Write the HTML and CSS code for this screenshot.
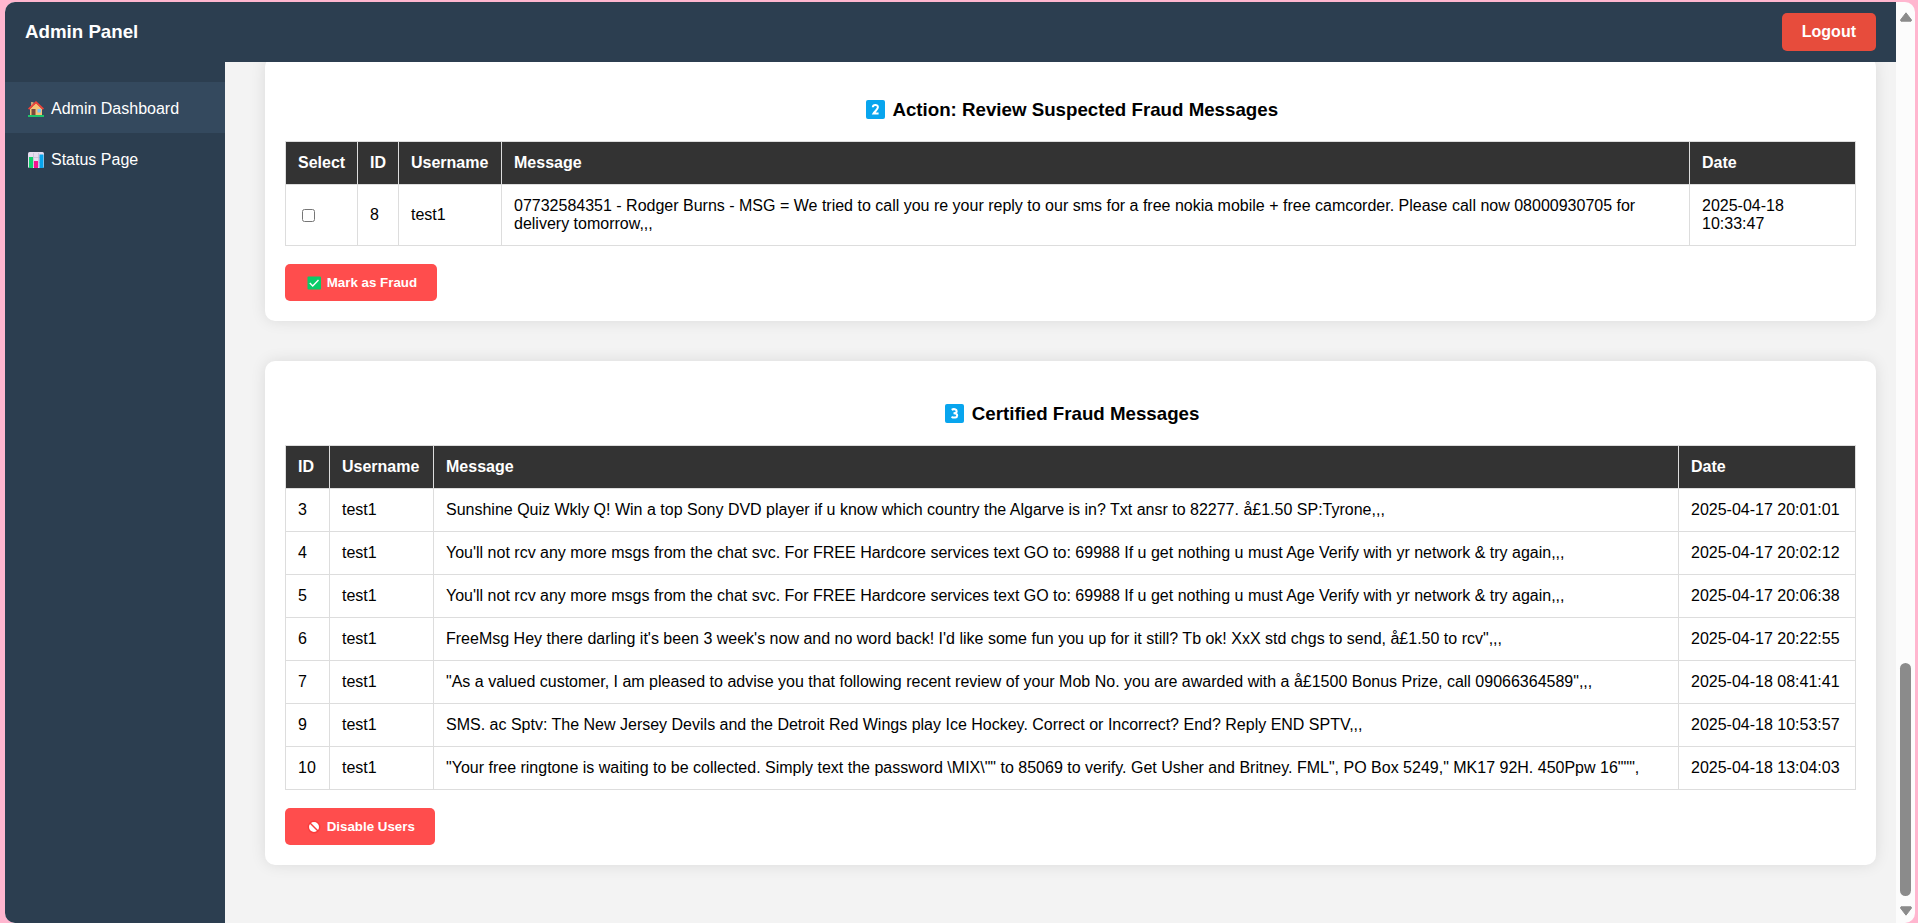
FILE: index.html
```html
<!DOCTYPE html>
<html lang="en">
<head>
<meta charset="utf-8">
<title>Admin Panel</title>
<link rel="stylesheet" href="styles.css">
</head>
<body>
<div class="window">
  <div class="page">
    <header class="topbar">
      <h3 class="brand">Admin Panel</h3>
      <button type="button" class="logout">Logout</button>
    </header>
    <div class="body">
      <nav class="sidebar">
        <a class="nav-link active" href="#dashboard"><svg class="icon icon-nav" viewBox="0 0 16 16" aria-hidden="true"><path fill="#c8a27a" d="M3 1h2.500v4H3z"/><path fill="#f5c377" d="M2 8l6-6 6 6v7H2z"/><path fill="#f0433a" d="M8 0l8 7.500-1.200 1.300L8 2.600 1.200 8.800 0 7.500z"/><path fill="#7a4a3c" d="M3.500 8H7.500v6.500h-4z"/><path fill="#7cc4f8" d="M9.500 8H13v3.500H9.500z"/><path fill="#1fc46b" d="M0 14h16v2H0z"/></svg><span>Admin Dashboard</span></a>
        <a class="nav-link" href="#status"><svg class="icon icon-nav" viewBox="0 0 16 16" aria-hidden="true"><rect width="16" height="16" rx="1.500" fill="#e6dcef"/><path stroke="#c5bad2" stroke-width=".7" d="M1 5.500h14M1 10.500h14M5.500 1v14M10.500 1v14"/><path fill="#12cf6c" d="M1 5h4v11H1z"/><path fill="#f5128f" d="M6 9h4v7H6z"/><path fill="#08a5ec" d="M11.500 2.500h4V16h-4z"/></svg><span>Status Page</span></a>
      </nav>
      <main class="content">
        <section class="card">
          <h3 class="card-title"><svg class="icon icon-title" viewBox="0 0 19 19" aria-hidden="true"><rect width="19" height="19" rx="2" fill="#08a5ee"/><path fill="none" stroke="#fff" stroke-width="2" d="M6.800 7.200C7 4.200 12 4.300 11.900 7.300c0 1.800-2.600 3.500-4.300 6.100h5"/></svg> Action: Review Suspected Fraud Messages</h3>
          <table class="grid">
            <colgroup><col class="c-select"><col class="c-id"><col class="c-user"><col><col class="c-date"></colgroup>
            <thead><tr><th>Select</th><th>ID</th><th>Username</th><th>Message</th><th>Date</th></tr></thead>
            <tbody>
              <tr><td><input type="checkbox" aria-label="Select message 8"></td><td>8</td><td>test1</td><td>07732584351 - Rodger Burns - MSG = We tried to call you re your reply to our sms for a free nokia mobile + free camcorder. Please call now 08000930705 for delivery tomorrow,,,</td><td>2025-04-18 10:33:47</td></tr>
            </tbody>
          </table>
          <button type="button" class="action"><svg class="icon icon-action" viewBox="0 0 14 14" aria-hidden="true"><rect x=".5" y=".5" width="13.500" height="13" rx="1" fill="#0acb68"/><path fill="none" stroke="#fff" stroke-width="1.400" d="M2.800 7l2.900 2.900L11.500 4"/></svg> Mark as Fraud</button>
        </section>
        <section class="card">
          <h3 class="card-title"><svg class="icon icon-title" viewBox="0 0 19 19" aria-hidden="true"><rect width="19" height="19" rx="2" fill="#08a5ee"/><path fill="none" stroke="#fff" stroke-width="2" d="M6.700 5.800c2-1.300 5-.6 5 1.500 0 1.500-1.500 2-3.200 2 2 0 3.700.5 3.700 2.100 0 2.300-3.400 2.800-5.700 1.500"/></svg> Certified Fraud Messages</h3>
          <table class="grid">
            <colgroup><col class="c-id-wide"><col class="c-user-wide"><col><col class="c-date-wide"></colgroup>
            <thead><tr><th>ID</th><th>Username</th><th>Message</th><th>Date</th></tr></thead>
            <tbody>
              <tr><td>3</td><td>test1</td><td>Sunshine Quiz Wkly Q! Win a top Sony DVD player if u know which country the Algarve is in? Txt ansr to 82277. å£1.50 SP:Tyrone,,,</td><td>2025-04-17 20:01:01</td></tr>
              <tr><td>4</td><td>test1</td><td>You'll not rcv any more msgs from the chat svc. For FREE Hardcore services text GO to: 69988 If u get nothing u must Age Verify with yr network &amp; try again,,,</td><td>2025-04-17 20:02:12</td></tr>
              <tr><td>5</td><td>test1</td><td>You'll not rcv any more msgs from the chat svc. For FREE Hardcore services text GO to: 69988 If u get nothing u must Age Verify with yr network &amp; try again,,,</td><td>2025-04-17 20:06:38</td></tr>
              <tr><td>6</td><td>test1</td><td>FreeMsg Hey there darling it's been 3 week's now and no word back! I'd like some fun you up for it still? Tb ok! XxX std chgs to send, å£1.50 to rcv",,,</td><td>2025-04-17 20:22:55</td></tr>
              <tr><td>7</td><td>test1</td><td>"As a valued customer, I am pleased to advise you that following recent review of your Mob No. you are awarded with a å£1500 Bonus Prize, call 09066364589",,,</td><td>2025-04-18 08:41:41</td></tr>
              <tr><td>9</td><td>test1</td><td>SMS. ac Sptv: The New Jersey Devils and the Detroit Red Wings play Ice Hockey. Correct or Incorrect? End? Reply END SPTV,,,</td><td>2025-04-18 10:53:57</td></tr>
              <tr><td>10</td><td>test1</td><td>"Your free ringtone is waiting to be collected. Simply text the password \MIX\"" to 85069 to verify. Get Usher and Britney. FML", PO Box 5249," MK17 92H. 450Ppw 16""",</td><td>2025-04-18 13:04:03</td></tr>
            </tbody>
          </table>
          <button type="button" class="action"><svg class="icon icon-action" viewBox="0 0 14 14" aria-hidden="true"><circle cx="7" cy="7" r="5.700" fill="#fff" stroke="#f93b3b" stroke-width="1.400"/><path stroke="#f93b3b" stroke-width="1.500" d="M3 3l8 8"/></svg> Disable Users</button>
        </section>
      </main>
    </div>
  </div>
  <div class="scrollbar" aria-hidden="true">
    <svg class="arrow" viewBox="0 0 12 10"><path fill="#8b8b8b" stroke="#8b8b8b" stroke-linejoin="round" d="M6 .8L11.500 8 11 9.200H1L.5 8z"/></svg>
    <div class="track"><div class="thumb"></div></div>
    <svg class="arrow" viewBox="0 0 12 10"><path fill="#8b8b8b" stroke="#8b8b8b" stroke-linejoin="round" d="M6 9.200L11.500 2 11 .8H1L.5 2z"/></svg>
  </div>
</div>
</body>
</html>
```
FILE: styles.css
```css
* {
  box-sizing: border-box;
}

body {
  margin: 0;
  height: 100vh;
  padding: 2px 3px 0 5px;
  background: #ffb6cf;
  color: #000;
  font: 16px/18px "Liberation Sans", Arial, sans-serif;
}

.window {
  display: flex;
  height: 100%;
  overflow: hidden;
  border-radius: 10px;
  background: #fcfcfc;
}

.page {
  display: flex;
  flex: 1;
  flex-direction: column;
  min-width: 0;
}

.topbar {
  display: flex;
  align-items: center;
  justify-content: space-between;
  height: 60px;
  padding: 0 20px;
  background: #2c3e50;
  color: #fff;
}

.brand {
  margin: 0;
  line-height: 22px;
}

button {
  border: 0;
  border-radius: 5px;
  color: #fff;
  font-family: inherit;
  font-weight: bold;
}

.logout {
  padding: 10px 20px;
  background: #e74c3c;
  font-size: 16px;
  line-height: 18px;
}

.body {
  display: flex;
  flex: 1;
  min-height: 0;
}

.sidebar {
  flex: none;
  width: 220px;
  padding-top: 20px;
  background: #2c3e50;
}

.nav-link {
  display: flex;
  align-items: center;
  gap: 4px;
  padding: 18px 20px 15px;
  color: #fff;
  text-decoration: none;
}

.nav-link.active {
  background: #34495e;
}

.icon {
  flex: none;
  margin: 0 3px;
}

.icon-nav {
  width: 16px;
  height: 16px;
}

.icon-title {
  width: 19px;
  height: 19px;
  vertical-align: -3px;
}

.icon-action {
  width: 14px;
  height: 14px;
  margin: 0 2px;
  vertical-align: -3px;
}

.content {
  display: flex;
  flex: 1;
  flex-direction: column;
  justify-content: flex-end;
  gap: 40px;
  min-width: 0;
  overflow: hidden;
  padding: 0 20px 58px 40px;
  background: #f3f3f3;
}

.card {
  flex: none;
  padding: 20px;
  border-radius: 10px;
  background: #fff;
  box-shadow: 0 0 15px rgba(0, 0, 0, 0.1);
}

.card-title {
  margin: 20px 0 18px;
  line-height: 26px;
  text-align: center;
}

.grid {
  width: 100%;
  border-collapse: collapse;
  table-layout: fixed;
}

.grid th,
.grid td {
  padding: 12px;
  border: 1px solid #ddd;
  text-align: left;
}

.grid th {
  background: #333;
  color: #fff;
}

.grid input {
  display: block;
  width: 13px;
  height: 13px;
  margin: 0 4px;
}

.c-select {
  width: 72px;
}

.c-id {
  width: 41px;
}

.c-id-wide {
  width: 44px;
}

.c-user {
  width: 103px;
}

.c-user-wide {
  width: 104px;
}

.c-date {
  width: 166px;
}

.c-date-wide {
  width: 177px;
}

.action {
  display: block;
  margin-top: 18px;
  padding: 10px 20px;
  background: #ff4d4d;
  line-height: 17px;
}

.scrollbar {
  display: flex;
  flex: none;
  flex-direction: column;
  align-items: center;
  gap: 10px;
  width: 19px;
  padding: 10px 0 7px;
}

.arrow {
  width: 12px;
  height: 10px;
}

.track {
  display: flex;
  flex: 1;
  flex-direction: column;
  justify-content: flex-end;
}

.thumb {
  width: 11px;
  height: 27%;
  border-radius: 6px;
  background: #8b8b8b;
}
```
